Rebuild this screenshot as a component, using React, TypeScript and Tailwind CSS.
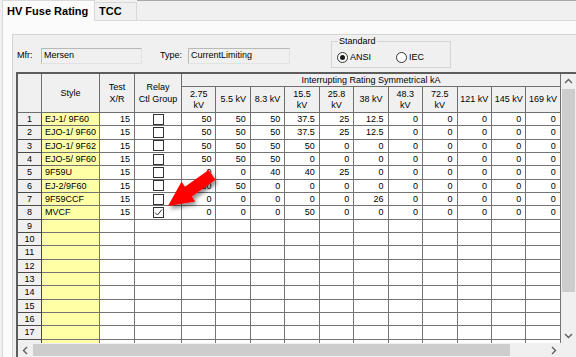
import React from 'react';

// kV column captions under "Interrupting Rating Symmetrical kA"
const kvCols: string[] = [
  '2.75\nkV', '5.5 kV', '8.3 kV', '15.5\nkV', '25.8\nkV', '38 kV',
  '48.3\nkV', '72.5\nkV', '121 kV', '145 kV', '169 kV',
];

type FuseRow = { style: string; xr: string; relay?: boolean; vals: string[] };

const fuseRows: FuseRow[] = [
  { style: 'EJ-1/ 9F60', xr: '15', relay: false, vals: ['50', '50', '50', '37.5', '25', '12.5', '0', '0', '0', '0', '0'] },
  { style: 'EJO-1/ 9F60', xr: '15', relay: false, vals: ['50', '50', '50', '37.5', '25', '12.5', '0', '0', '0', '0', '0'] },
  { style: 'EJO-1/ 9F62', xr: '15', relay: false, vals: ['50', '50', '50', '50', '0', '0', '0', '0', '0', '0', '0'] },
  { style: 'EJO-5/ 9F60', xr: '15', relay: false, vals: ['50', '50', '50', '0', '0', '0', '0', '0', '0', '0', '0'] },
  { style: '9F59U', xr: '15', relay: false, vals: ['0', '0', '40', '40', '25', '0', '0', '0', '0', '0', '0'] },
  { style: 'EJ-2/9F60', xr: '15', relay: false, vals: ['50', '50', '0', '0', '0', '0', '0', '0', '0', '0', '0'] },
  { style: '9F59CCF', xr: '15', relay: false, vals: ['0', '0', '0', '0', '0', '26', '0', '0', '0', '0', '0'] },
  { style: 'MVCF', xr: '15', relay: true, vals: ['0', '0', '0', '50', '0', '0', '0', '0', '0', '0', '0'] },
];

const TOTAL_ROWS = 18;

const headCell = 'bg-[#f0f0f0] border-r border-b border-[#6e6e6e] flex items-center justify-center text-center whitespace-pre-line leading-[11px]';
const dataCell = 'bg-white border-r border-b border-[#747474] flex items-center justify-end pr-[4px] leading-[12px]';

const Chevron: React.FC<{ dir: 'up' | 'down' | 'left' | 'right' }> = ({ dir }) => {
  const pts = {
    up: '1,5 4.5,1.5 8,5',
    down: '1,2 4.5,5.5 8,2',
    left: '5,1 1.5,4.5 5,8',
    right: '2,1 5.5,4.5 2,8',
  }[dir];
  const horiz = dir === 'left' || dir === 'right';
  return (
    <svg width={horiz ? 7 : 9} height={horiz ? 9 : 7} viewBox={horiz ? '0 0 7 9' : '0 0 9 7'}>
      <polyline points={pts} fill="none" stroke="#606060" strokeWidth="1.4" />
    </svg>
  );
};

const Radio: React.FC<{ label: string; checked?: boolean; className?: string }> = ({ label, checked, className }) => (
  <div className={`flex items-center ${className || ''}`}>
    <span className="w-[11px] h-[11px] rounded-full border border-[#333] bg-white flex items-center justify-center">
      {checked && <span className="w-[5px] h-[5px] rounded-full bg-[#1a1a1a]" />}
    </span>
    <span className="ml-[2px] leading-[11px]">{label}</span>
  </div>
);

const FuseGrid: React.FC = () => {
  const body = Array.from({ length: TOTAL_ROWS }, (_, i) => fuseRows[i] ?? null);
  return (
    <div className="grid grid-cols-[24px_58px_35px_47px_repeat(11,34.45px)] grid-rows-[13px_26px_repeat(18,13.33px)]">
      <div className={`${headCell} row-span-2`} />
      <div className={`${headCell} row-span-2`}>Style</div>
      <div className={`${headCell} row-span-2 leading-[12px]`}>{'Test\nX/R'}</div>
      <div className={`${headCell} row-span-2 leading-[12px]`}>{'Relay\nCtl Group'}</div>
      <div className={`${headCell} col-span-11`}>Interrupting Rating Symmetrical kA</div>
      {kvCols.map(k => (
        <div key={k} className={headCell}>{k}</div>
      ))}

      {body.map((row, i) => (
        <React.Fragment key={i}>
          <div className="bg-[#f0f0f0] border-r border-b border-[#4a4a4a] flex items-center justify-center leading-[12px]">{i + 1}</div>
          <div className="bg-[#ffffa6] border-r border-b border-[#747474] flex items-center pl-[3px] leading-[12px]">{row?.style}</div>
          <div className={dataCell}>{row?.xr}</div>
          <div className="bg-white border-r border-b border-[#747474] flex items-center justify-center">
            {row && (
              <span className="w-[11px] h-[11px] border border-[#333] bg-white flex items-center justify-center">
                {row.relay && (
                  <svg width="9" height="9" viewBox="0 0 9 9">
                    <polyline points="1,4.5 3.5,7 8,1.5" fill="none" stroke="#333" strokeWidth="1" />
                  </svg>
                )}
              </span>
            )}
          </div>
          {kvCols.map((_, c) => (
            <div key={c} className={dataCell}>{row?.vals[c]}</div>
          ))}
        </React.Fragment>
      ))}
    </div>
  );
};

export default function App() {
  return (
    <div className="relative w-[576px] h-[357px] overflow-hidden bg-[#f0f0f0] text-[9px] text-black flex flex-col font-['Liberation_Sans',Arial,sans-serif]">
      {/* tab strip */}
      <div className="flex items-end h-[20px] shrink-0 pl-[2px]">
        <div className="relative z-10 -mb-px h-[21px] w-[93px] bg-[#fbfbfb] border border-b-0 border-[#d9d9d9] pl-[4px] pt-[2px] text-[11px] font-bold leading-[16px]">
          HV Fuse Rating
        </div>
        <div className="h-[18px] w-[42px] border border-l-0 border-b-0 border-[#d9d9d9] bg-[#f0f0f0] pl-[4px] text-[11px] font-bold leading-[16px]">
          TCC
        </div>
        <div className="flex-1 self-stretch border-t border-[#a8a8a8]" />
      </div>

      {/* tab page */}
      <div className="flex-1 min-h-0 ml-[2px] bg-[#fbfbfb] border-t border-l border-[#d9d9d9] pl-[9px] pt-[13px] flex flex-col">
        <div className="flex-1 min-h-0 bg-[#f0f0f0] border-t border-l border-[#d4d4d4] flex flex-col">
          {/* header fields */}
          <div className="h-[37px] shrink-0 flex items-start">
            <div className="ml-[4px] w-[24px] mt-[15px] leading-[11px]">Mfr:</div>
            <div className="mt-[13px] w-[101px] h-[16px] bg-[#f0f0f0] border border-[#b9b9b9] border-r-[#e2e2e2] border-b-[#e2e2e2] pl-[2px] flex items-center">Mersen</div>
            <div className="ml-[18px] w-[28px] mt-[15px] leading-[11px]">Type:</div>
            <div className="mt-[13px] w-[102px] h-[16px] bg-[#f0f0f0] border border-[#b9b9b9] border-r-[#e2e2e2] border-b-[#e2e2e2] pl-[2px] flex items-center">CurrentLimiting</div>
            <div className="relative ml-[41px] mt-[6px] w-[120px] h-[27px] border border-[#d5d5d5]">
              <span className="absolute -top-[6px] left-[6px] px-[1px] bg-[#f0f0f0] leading-[11px]">Standard</span>
              <div className="flex items-center h-full pt-[5px] pl-[5px]">
                <Radio label="ANSI" checked className="w-[59px]" />
                <Radio label="IEC" />
              </div>
            </div>
          </div>

          {/* grid with scrollbars */}
          <div className="flex-1 min-h-0 ml-[3px] border-l-2 border-t-2 border-[#5c5c5c] flex flex-col">
            <div className="flex-1 min-h-0 flex">
              <div className="w-[543px] h-full overflow-hidden bg-white">
                <FuseGrid />
              </div>
              <div className="w-[15px] h-full bg-[#f0f0f0] flex flex-col">
                <div className="h-[15px] flex items-center justify-center"><Chevron dir="up" /></div>
                <div className="h-[203px] mx-[1px] bg-[#cdcdcd]" />
                <div className="flex-1" />
                <div className="h-[15px] flex items-center justify-center"><Chevron dir="down" /></div>
              </div>
            </div>
            <div className="h-[14px] shrink-0 flex">
              <div className="w-[543px] flex bg-[#f0f0f0]">
                <div className="w-[15px] flex items-center justify-center"><Chevron dir="left" /></div>
                <div className="w-[477px] my-[1px] bg-[#cdcdcd]" />
                <div className="flex-1" />
                <div className="w-[15px] flex items-center justify-center"><Chevron dir="right" /></div>
              </div>
              <div className="w-[15px] bg-[#f0f0f0]" />
            </div>
          </div>
        </div>
      </div>

      {/* red callout arrow */}
      <svg className="absolute inset-0 pointer-events-none" width="576" height="357" viewBox="0 0 576 357">
        <defs>
          <filter id="arrowShadow" x="-30%" y="-30%" width="160%" height="160%">
            <feDropShadow dx="2" dy="3" stdDeviation="2" floodColor="#000" floodOpacity="0.45" />
          </filter>
        </defs>
        <polygon
          points="168,206 195.3,201.4 191.9,196.5 215.6,179.8 208.6,170 185,186.7 181.5,181.8"
          fill="#ff0000"
          filter="url(#arrowShadow)"
        />
      </svg>
    </div>
  );
}
